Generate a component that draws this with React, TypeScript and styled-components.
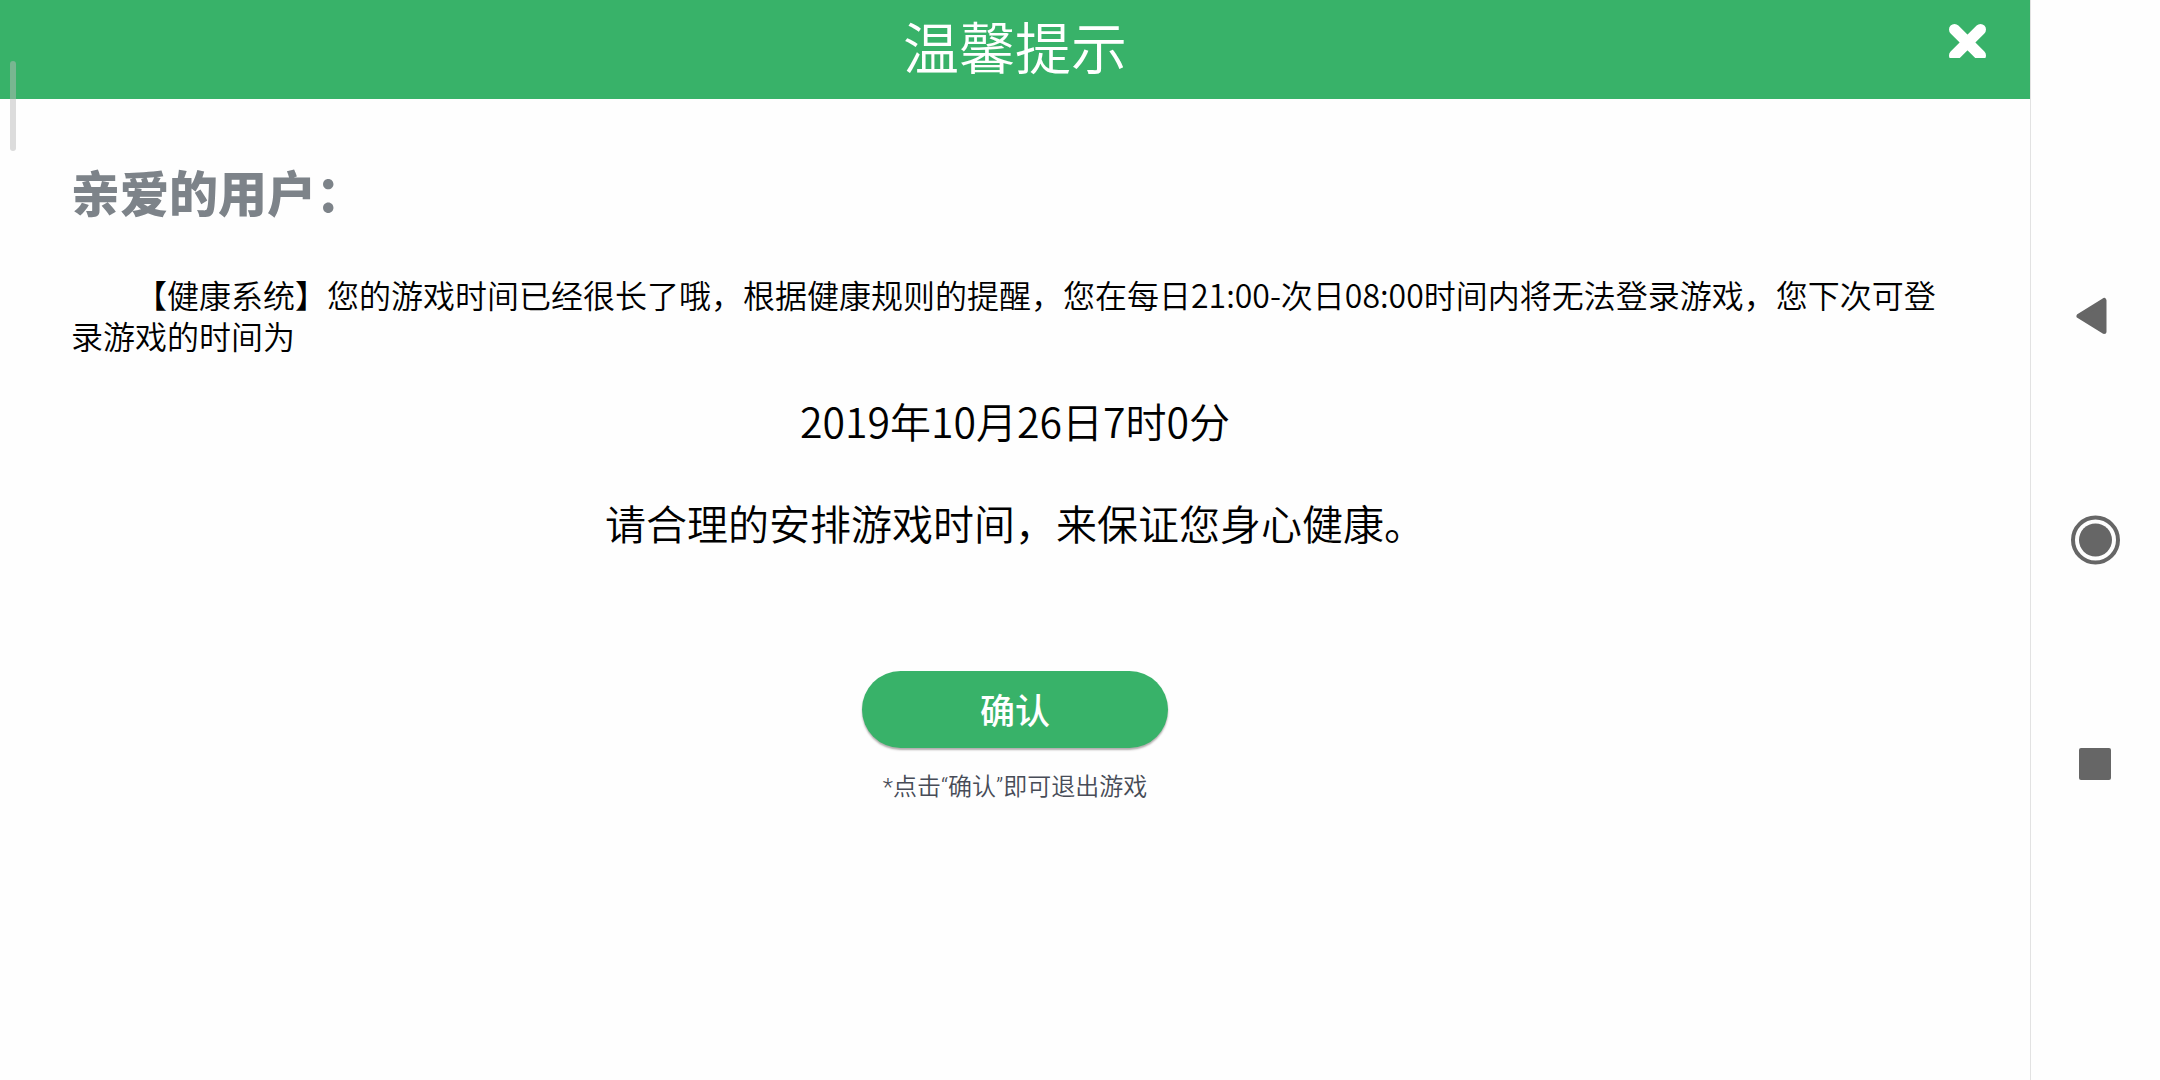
import React from "react";
import styled, { createGlobalStyle } from "styled-components";

const GREEN = "#38b269";
const ICON_GREY = "#666666";

const GlobalStyle = createGlobalStyle`
  *, *::before, *::after { box-sizing: border-box; }
  body {
    margin: 0;
    background: #fefefe;
    color: #000;
    font-family: "Noto Sans CJK SC", sans-serif;
    font-weight: 350;
  }
  h1, h2, p { margin: 0; }
  button {
    padding: 0;
    border: 0;
    background: none;
    font-family: inherit;
    cursor: pointer;
  }
`;

const Screen = styled.div`
  display: flex;
  min-height: 100vh;
`;

const Dialog = styled.main`
  position: relative;
  flex: 1;
  min-width: 0;
`;

const Header = styled.header`
  display: grid;
  grid-template-columns: 1fr auto 1fr;
  height: 99px;
  padding: 0 44px;
  background: ${GREEN};
`;

const Title = styled.h1`
  grid-column: 2;
  color: #fff;
  font-size: 56px;
  font-weight: 350;
  line-height: 90px;
`;

const CloseButton = styled.button`
  display: flex;
  justify-self: end;
  align-self: start;
  margin-top: 24px;
`;

const ScrollThumb = styled.div`
  position: absolute;
  top: 61px;
  left: 10px;
  width: 6px;
  height: 90px;
  border-radius: 3px;
  background: rgba(186, 186, 186, 0.5);
`;

const Content = styled.section`
  display: flex;
  flex-direction: column;
  align-items: center;
  padding: 67px 71px 0;
`;

const Greeting = styled.h2`
  align-self: flex-start;
  color: #7d8389;
  font-size: 49px;
  font-weight: 900;
  line-height: 50px;
`;

const Message = styled.p`
  align-self: stretch;
  margin-top: 58px;
  font-size: 32px;
  line-height: 41px;
  text-indent: 2em;
`;

const Highlight = styled.p<{ $gap: number }>`
  margin-top: ${(p) => p.$gap}px;
  font-size: 41px;
  line-height: 60px;
`;

const ConfirmButton = styled.button`
  width: 306px;
  height: 77px;
  margin-top: 119px;
  padding-bottom: 2px;
  border-radius: 39px;
  background: ${GREEN};
  box-shadow: 0 2px 2px rgba(60, 50, 50, 0.4);
  color: #fff;
  font-size: 35px;
  font-weight: 500;
`;

const Hint = styled.p`
  margin-top: 24px;
  color: #474c57;
  font-family: Roboto, "Noto Sans CJK SC", sans-serif;
  font-size: 24px;
  line-height: 30px;
`;

const SystemBar = styled.nav`
  display: flex;
  flex-direction: column;
  align-items: center;
  justify-content: center;
  gap: 160px;
  width: 130px;
  padding-right: 1px;
  border-left: 1px solid #e2e2e2;
`;

const NavButton = styled.button`
  display: flex;
  width: 64px;
  height: 64px;
`;

export default function App() {
  return (
    <Screen lang="zh-CN">
      <GlobalStyle />
      <Dialog>
        <Header>
          <Title>温馨提示</Title>
          <CloseButton aria-label="关闭">
            <svg width="37" height="34" viewBox="0 0 37 34">
              <path d="M5.5 5.5L31.5 31.5M31.5 5.5L5.5 31.5" stroke="#fff" strokeWidth="11" strokeLinecap="round" />
            </svg>
          </CloseButton>
        </Header>
        <Content>
          <Greeting>亲爱的用户：</Greeting>
          <Message>
            【健康系统】您的游戏时间已经很长了哦，根据健康规则的提醒，您在每日21:00-次日08:00时间内将无法登录游戏，您下次可登录游戏的时间为
          </Message>
          <Highlight $gap={34}>2019年10月26日7时0分</Highlight>
          <Highlight $gap={42}>请合理的安排游戏时间，来保证您身心健康。</Highlight>
          <ConfirmButton>确认</ConfirmButton>
          <Hint>*点击“确认”即可退出游戏</Hint>
        </Content>
        <ScrollThumb />
      </Dialog>
      <SystemBar aria-label="系统导航">
        <NavButton aria-label="返回">
          <svg width="64" height="64" viewBox="0 0 64 64">
            <path d="M16 32L41 16.5V47.5Z" fill={ICON_GREY} stroke={ICON_GREY} strokeWidth="5" strokeLinejoin="round" />
          </svg>
        </NavButton>
        <NavButton aria-label="主页">
          <svg width="64" height="64" viewBox="0 0 64 64">
            <circle cx="32.5" cy="32" r="22.5" fill="none" stroke={ICON_GREY} strokeWidth="4" />
            <circle cx="32.5" cy="32" r="16.5" fill={ICON_GREY} />
          </svg>
        </NavButton>
        <NavButton aria-label="最近任务">
          <svg width="64" height="64" viewBox="0 0 64 64">
            <rect x="16" y="16" width="32" height="32" rx="2" fill={ICON_GREY} />
          </svg>
        </NavButton>
      </SystemBar>
    </Screen>
  );
}
